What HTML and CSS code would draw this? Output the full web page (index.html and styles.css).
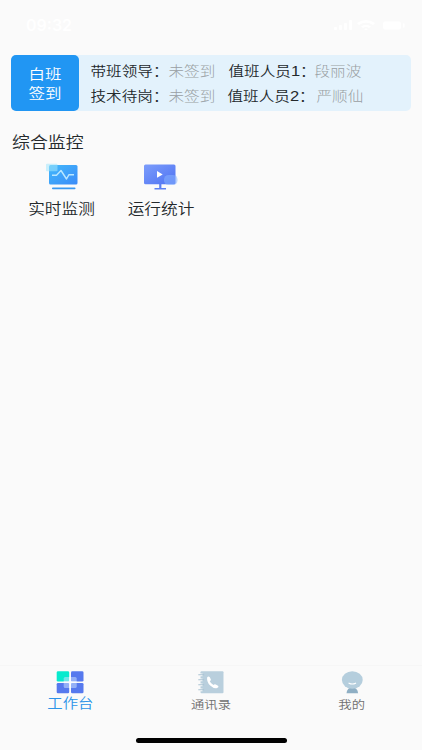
FILE: index.html
```html
<!DOCTYPE html>
<html lang="zh-CN">
<head>
<meta charset="utf-8">
<title>工作台</title>
<link rel="stylesheet" href="styles.css">
</head>
<body>
<header class="status">
  <span class="clock">09:32</span>
  <svg class="signals" width="76" height="16" viewBox="0 0 76 16" fill="#fff">
    <rect x="2" y="8" width="3" height="3" rx="1"/><rect x="7" y="6" width="3" height="5" rx="1"/><rect x="12" y="4" width="3" height="7" rx="1"/><rect x="17" y="1" width="3" height="10" rx="1"/>
    <path d="M25 4Q34-2 43 4L41 6Q34 1.500 27 6ZM29 7.500Q34 4 39 7.500L37 9Q34 7 31 9ZM32 10Q34 9 36 10L34 11.500Z"/>
    <rect x="51" y="2.500" width="18" height="8" rx="2"/><rect x="71" y="4.500" width="1.500" height="4"/>
  </svg>
</header>
<main class="content">
  <section class="duty">
    <button class="sign"><span class="t">白班</span><span class="t">签到</span></button>
    <div class="people">
      <div class="row"><span class="t role">带班领导：</span><span class="t name">未签到</span><span class="t role staff">值班人员<span class="num">1</span>：</span><span class="t name">段丽波</span></div>
      <div class="row second"><span class="t role">技术待岗：</span><span class="t name">未签到</span><span class="t role staff">值班人员<span class="num">2</span>：</span><span class="t name">严顺仙</span></div>
    </div>
  </section>
  <h2 class="title t">综合监控</h2>
  <section class="apps">
    <a class="app">
      <svg width="34" height="28" viewBox="0 0 34 28">
        <defs><linearGradient id="ga" x1="0" y1="0" x2="1" y2="1"><stop offset="0" stop-color="#42b9fb"/><stop offset="1" stop-color="#3b8bf8"/></linearGradient></defs>
        <rect x="4" y="2" width="28.500" height="19.500" rx="1.500" fill="url(#ga)"/>
        <rect x="1" y=".7" width="11.500" height="7.500" rx="1" fill="#a3e5fb" opacity=".55"/>
        <path d="M7 12.200H11.500L16 7.500L21.500 16L24 11.700H29" fill="none" stroke="#b9e7ff" stroke-width="1.400" stroke-linejoin="round"/>
        <rect x="7" y="24.400" width="23.500" height="1.800" rx=".8" fill="#3998f1"/>
      </svg>
      <span class="t">实时监测</span>
    </a>
    <a class="app">
      <svg width="34" height="28" viewBox="0 0 34 28">
        <defs><linearGradient id="gb" x1="0" y1="0" x2="1" y2="1"><stop offset="0" stop-color="#7c9dfb"/><stop offset="1" stop-color="#4e72f2"/></linearGradient></defs>
        <path d="M15.200 20h2.200v5h4.600v1.500h-11.500v-1.500h4.700z" fill="#5c80f3"/>
        <rect x="0" y="1.500" width="31.500" height="19.800" rx="1.500" fill="url(#gb)"/>
        <rect x="20" y="12" width="13.500" height="10" rx="4.500" fill="#86b2ff" opacity=".55"/>
        <path d="M13 8L18.700 11.400L13 14.800Z" fill="#fff"/>
      </svg>
      <span class="t">运行统计</span>
    </a>
  </section>
</main>
<nav class="tabs">
  <a class="tab active">
    <svg width="28" height="24" viewBox="0 0 28 24">
      <rect x=".7" y="1.300" width="12.500" height="10.200" rx="1.300" fill="#08eace"/>
      <rect x="15" y="1.300" width="12.500" height="10.200" rx="1.300" fill="#5679ee"/>
      <rect x=".7" y="13" width="12.500" height="10.200" rx="1.300" fill="#5679ee"/>
      <rect x="15" y="13" width="12.500" height="10.200" rx="1.300" fill="#5679ee"/>
      <rect x="7.700" y="7" width="13" height="11" rx="1.500" fill="#c8deff" opacity=".55"/>
      <path d="M13.200 7h1.800v4.500h5.700v1.500h-5.700v5h-1.800v-5h-5.500v-1.500h5.500z" fill="#fff" opacity=".85"/>
    </svg>
    <span class="t">工作台</span>
  </a>
  <a class="tab">
    <svg width="26" height="24" viewBox="0 0 26 24">
      <rect x="2.500" y="1.300" width="23" height="22" rx="1" fill="#b9cfdd"/>
      <path d="M0 4.800h4.500M0 9.800h4.500M0 14.800h4.500M0 19.800h4.500" stroke="#fafafa" stroke-width="2.700"/>
      <path d="M.7 4.800h5M.7 9.800h5M.7 14.800h5M.7 19.800h5" stroke="#a9c2d2" stroke-width="1.100" stroke-linecap="round"/>
      <path d="M9.200 7.200Q10.500 5.900 11.800 7.300L12.900 9.500Q13 10.500 11.800 11.200Q12.800 13.500 15.500 15Q16.500 13.800 17.800 14.500L20.400 16Q20.800 17.300 19.100 18Q16 19 12.200 15.500Q8.200 11.500 9.200 7.200Z" fill="#fff"/>
    </svg>
    <span class="t">通讯录</span>
  </a>
  <a class="tab">
    <svg width="24" height="24" viewBox="0 0 24 24">
      <path d="M6.500 23.300Q7 17.500 12.300 17.500Q17.600 17.500 18.100 23.300Z" fill="#8fafc4"/>
      <ellipse cx="12.300" cy="10" rx="10.400" ry="8.700" fill="#b5cedd"/>
      <path d="M9 13.200Q12.300 14.800 15.600 13.200" fill="none" stroke="#fff" stroke-width="1.200" stroke-linecap="round"/>
    </svg>
    <span class="t">我的</span>
  </a>
</nav>
<footer class="home"><i class="home-bar"></i></footer>
</body>
</html>
```
FILE: styles.css
```css
* { box-sizing: border-box; }
body {
  margin: 0;
  height: 750px;
  display: flex;
  flex-direction: column;
  overflow: hidden;
  background: #fafafa;
  color: #24292c;
  font-family: "Noto Sans CJK SC", sans-serif;
  font-weight: 350;
}
svg { display: block; }
/* Wide, slightly flattened letterforms */
.t { display: block; white-space: nowrap; transform: scaleY(.86); }
.status {
  height: 55px;
  padding: 19px 14px 0 26px;
  display: flex;
  justify-content: space-between;
  align-items: flex-start;
  color: #fff;
}
.clock { font: 600 16px/13px Inter, sans-serif; }
.content { flex: 1; }
.duty {
  display: flex;
  width: 400px;
  height: 56px;
  margin-left: 11px;
  border-radius: 5px;
  background: #e3f2fc;
}
.sign {
  width: 68px;
  padding: 0;
  border: 0;
  border-radius: 5px;
  background: #2196f3;
  color: #fff;
  font: 350 16.5px/19px "Noto Sans CJK SC", sans-serif;
}
.people { padding: 3px 0 0 11.5px; }
.row {
  display: grid;
  grid-template-columns: 78px 60px 86px auto;
  height: 25px;
  font-size: 15.6px;
  line-height: 24px;
}
.second { grid-template-columns: 78px 59px 89px auto; }
.name { color: #999fa3; font-weight: 300; }
.num { font-family: "Liberation Sans", sans-serif; font-size: 16.5px; line-height: 1; }
.title {
  margin: 18px 0 0 12px;
  font-size: 17.9px;
  line-height: 24px;
  font-weight: 350;
}
.apps { display: flex; gap: 32.500px; padding: 10px 0 0 28px; }
.app {
  width: 67px;
  display: flex;
  flex-direction: column;
  align-items: center;
  font-size: 16.7px;
  line-height: 24px;
}
.app .t { margin-top: 5px; }
.tabs {
  height: 65px;
  display: grid;
  grid-template-columns: repeat(3, 1fr);
  border-top: 1px solid #f6f6f6;
  color: #707070;
}
.tab {
  display: flex;
  flex-direction: column;
  align-items: center;
  padding-top: 4px;
  font-size: 13.3px;
  line-height: 18px;
}
.tab .t { margin-top: 2px; }
.tab.active { color: #2d94e8; font-size: 15.4px; }
.tab.active .t { margin-top: -1px; }
.home { height: 20px; padding-top: 8px; }
.home-bar {
  display: block;
  width: 151px;
  height: 5px;
  margin: 0 auto;
  border-radius: 3px;
  background: #000;
}
```
